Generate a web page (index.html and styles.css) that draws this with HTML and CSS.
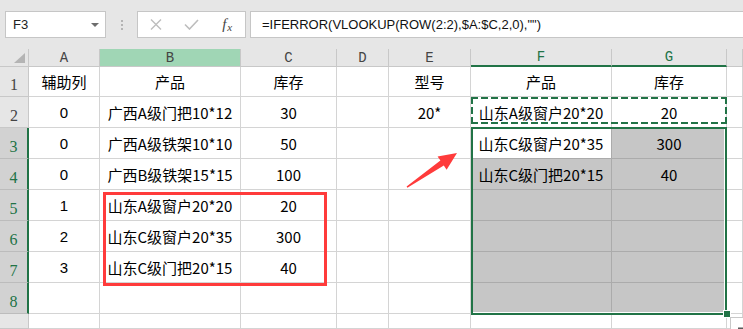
FILE: index.html
```html
<!DOCTYPE html>
<html lang="zh-CN">
<head>
    <meta charset="UTF-8">
    <title>IFERROR VLOOKUP</title>
    <link rel="stylesheet" href="styles.css">
</head>
<body>

    <!-- name box + formula bar -->
    <div class="toolbar">
        <div class="namebox">F3<span class="caret"></span></div>
        <div class="grip"><i></i><i></i><i></i></div>
        <div class="fbtns">
            <span class="btn">
                <svg width="12" height="11" viewBox="0 0 12 11"><path d="M1 0.5 L11 10.5 M11 0.5 L1 10.5" stroke="#bdbdbd" stroke-width="1.4" fill="none"/></svg>
            </span>
            <span class="btn">
                <svg width="15" height="11" viewBox="0 0 15 11"><path d="M1 5.5 L5.5 10 L14 1" stroke="#bdbdbd" stroke-width="1.6" fill="none"/></svg>
            </span>
            <span class="btn fx">f<small>x</small></span>
        </div>
        <div class="formula">=IFERROR(VLOOKUP(ROW(2:2),$A:$C,2,0),"")</div>
    </div>

    <div class="sheet">
        <div class="cells">
            <!-- header row -->
            <div class="ch corner"><span class="tri"></span></div>
            <div class="ch">A</div>
            <div class="ch hl">B</div>
            <div class="ch">C</div>
            <div class="ch">D</div>
            <div class="ch">E</div>
            <div class="ch on">F</div>
            <div class="ch on">G</div>
            <div class="ch"></div>

            <div class="rh">1</div>
            <div>辅助列</div>
            <div>产品</div>
            <div>库存</div>
            <div></div>
            <div>型号</div>
            <div>产品</div>
            <div>库存</div>
            <div></div>

            <div class="rh">2</div>
            <div class="n">0</div>
            <div>广西A级门把10*12</div>
            <div>30</div>
            <div></div>
            <div>20*</div>
            <div>山东A级窗户20*20</div>
            <div>20</div>
            <div></div>

            <div class="rh on">3</div>
            <div class="n">0</div>
            <div>广西A级铁架10*10</div>
            <div>50</div>
            <div></div>
            <div></div>
            <div class="act">山东C级窗户20*35</div>
            <div class="g">300</div>
            <div></div>

            <div class="rh on">4</div>
            <div class="n">0</div>
            <div>广西B级铁架15*15</div>
            <div>100</div>
            <div></div>
            <div></div>
            <div class="g">山东C级门把20*15</div>
            <div class="g">40</div>
            <div></div>

            <div class="rh on">5</div>
            <div class="n">1</div>
            <div>山东A级窗户20*20</div>
            <div>20</div>
            <div></div>
            <div></div>
            <div class="g"></div>
            <div class="g"></div>
            <div></div>

            <div class="rh on">6</div>
            <div class="n">2</div>
            <div>山东C级窗户20*35</div>
            <div>300</div>
            <div></div>
            <div></div>
            <div class="g"></div>
            <div class="g"></div>
            <div></div>

            <div class="rh on">7</div>
            <div class="n">3</div>
            <div>山东C级门把20*15</div>
            <div>40</div>
            <div></div>
            <div></div>
            <div class="g"></div>
            <div class="g"></div>
            <div></div>

            <div class="rh on">8</div>
            <div></div>
            <div></div>
            <div></div>
            <div></div>
            <div></div>
            <div class="g"></div>
            <div class="g"></div>
            <div></div>

            <div class="rh"></div>
            <div></div>
            <div></div>
            <div></div>
            <div></div>
            <div></div>
            <div></div>
            <div></div>
            <div></div>
        </div>

        <!-- marks drawn over the cells -->
        <div class="marks">
            <div class="redbox"></div>
            <div class="ants"></div>
            <div class="range"></div>
            <div class="handle"></div>
            <svg class="arrow" viewBox="389 128 82 62" preserveAspectRatio="none">
                <polygon points="406.6,186.4 440.4,160.6 437.6,156.5 457,153 446.6,169.7 443.8,165.6 407.4,187.8" fill="#ff3b3b"/>
            </svg>
            <div class="paste">
                <svg width="14" height="12" viewBox="0 0 14 12">
                    <rect x="1" y="3" width="12" height="9" fill="#e2b36c"/>
                    <rect x="5" y="0.5" width="5" height="3.5" fill="#5a5a5a"/>
                    <rect x="4" y="6" width="7" height="6" fill="#fff"/>
                </svg>
            </div>
        </div>
    </div>

</body>
</html>
```

FILE: styles.css
```css
body {
    margin: 0;
    height: 100vh;
    display: flex;
    flex-direction: column;
    overflow: hidden;
    background-color: #fff;
    font-family: "Noto Sans CJK SC", sans-serif;
    --cols: 29px 71px 141px 96px 52px 82px 141px 115px 1fr;
    --rows: 18px 30px repeat(7, 31px) 1fr;
}

/* formula bar */
.toolbar {
    flex: none;
    height: 49px;
    box-sizing: border-box;
    padding: 11px 0 0 5px;
    display: flex;
    align-items: flex-start;
    background-color: #e6e6e6;
}

.namebox {
    width: 101px;
    height: 27px;
    box-sizing: border-box;
    border: 1px solid #c6c6c6;
    background-color: #fff;
    padding: 0 6px 0 7px;
    display: flex;
    align-items: center;
    justify-content: space-between;
    font: 13px "Liberation Sans", sans-serif;
    color: #222;
}

.caret {
    border-left: 4px solid transparent;
    border-right: 4px solid transparent;
    border-top: 4px solid #6d6d6d;
}

.grip {
    width: 31px;
    padding-top: 9px;
    display: flex;
    flex-direction: column;
    align-items: center;
    gap: 2px;
}

.grip i {
    width: 2px;
    height: 2px;
    background-color: #b4b4b4;
}

.fbtns {
    width: 109px;
    height: 27px;
    box-sizing: border-box;
    border: 1px solid #c6c6c6;
    background-color: #fff;
    display: flex;
    align-items: center;
}

.btn {
    width: 36px;
    display: flex;
    justify-content: center;
    align-items: center;
}

.fx {
    font: italic 15px "Liberation Serif", serif;
    color: #444;
}

.fx small {
    font-size: 11px;
    margin-left: 1px;
    position: relative;
    top: 2px;
}

.formula {
    flex: 1;
    margin-left: 4px;
    height: 27px;
    box-sizing: border-box;
    border: 1px solid #c6c6c6;
    border-right: none;
    background-color: #fff;
    padding-left: 11px;
    display: flex;
    align-items: center;
    white-space: nowrap;
    font: 13px "Liberation Sans", sans-serif;
    color: #111;
}

/* sheet */
.sheet {
    flex: 1;
    min-height: 0;
    display: grid;
    grid-template: 1fr / 1fr;
}

.cells, .marks {
    grid-area: 1 / 1;
    display: grid;
    grid-template-columns: var(--cols);
    grid-template-rows: var(--rows);
    min-height: 0;
}

.cells > div {
    box-sizing: border-box;
    border-right: 1px solid #d4d4d4;
    border-bottom: 1px solid #d4d4d4;
    display: flex;
    align-items: center;
    justify-content: center;
    overflow: hidden;
    white-space: nowrap;
    font-size: 15px;
    line-height: 1;
    color: #000;
}

.cells > .n {
    font: 15px "Liberation Sans", sans-serif;
}

.cells > .ch {
    background-color: #e6e6e6;
    border-color: #c8c8c8;
    font: 14px "Liberation Mono", monospace;
    color: #444;
}

.cells > .ch.hl {
    background-color: #a0d6b5;
}

.cells > .ch.on {
    color: #217346;
    border-bottom: 2px solid #217346;
}

.cells > .corner {
    justify-content: flex-end;
    align-items: flex-end;
    padding: 0 3px 3px 0;
}

.tri {
    width: 0;
    height: 0;
    border-left: 11px solid transparent;
    border-bottom: 10px solid #b4b4b4;
}

.cells > .rh {
    background-color: #e6e6e6;
    border-color: #c8c8c8;
    align-items: flex-end;
    padding-bottom: 2px;
    font: 16px "Liberation Serif", serif;
    color: #444;
}

.cells > .rh.on {
    background-color: #d2d2d2;
    color: #217346;
    border-right: 2px solid #217346;
    border-bottom-color: #bcbcbc;
}

.cells > .g {
    background-color: #c6c6c6;
    border-color: #ababab;
}

.cells > .act {
    border-color: #ababab;
}

/* overlays */
.marks {
    pointer-events: none;
}

.redbox {
    grid-column: 3 / 5;
    grid-row: 6 / 9;
    margin: 2px 10px -3px 3px;
    border: 3px solid #ff3b3b;
}

.ants {
    grid-column: 7 / 9;
    grid-row: 3 / 4;
    margin-bottom: 4px;
    background:
        repeating-linear-gradient(90deg, #217346 0 7px, transparent 7px 10px) top / 100% 2px no-repeat,
        repeating-linear-gradient(90deg, #217346 0 7px, transparent 7px 10px) bottom / 100% 2px no-repeat,
        repeating-linear-gradient(180deg, #217346 0 7px, transparent 7px 10px) left / 2px 100% no-repeat,
        repeating-linear-gradient(180deg, #217346 0 7px, transparent 7px 10px) right / 2px 100% no-repeat;
}

.range {
    grid-column: 7 / 9;
    grid-row: 4 / 10;
    margin: -1px 0 -1px 0;
    border: 2px solid #217346;
    box-shadow: inset -1px -1px 0 #fff;
}

.handle {
    grid-column: 8;
    grid-row: 9;
    justify-self: end;
    align-self: end;
    width: 6px;
    height: 6px;
    background-color: #217346;
    border: 1px solid #fff;
    margin: 0 -4px -4px 0;
}

.arrow {
    grid-column: 6;
    grid-row: 4 / 6;
    width: 100%;
    height: 100%;
}

.paste {
    grid-column: 9;
    grid-row: 10;
    margin: 3px 0 0 3px;
    border: 1px solid #c8c8c8;
    border-right: none;
    border-bottom: none;
    background-color: #fff;
    padding: 2px 0 0 2px;
    overflow: hidden;
}
```
